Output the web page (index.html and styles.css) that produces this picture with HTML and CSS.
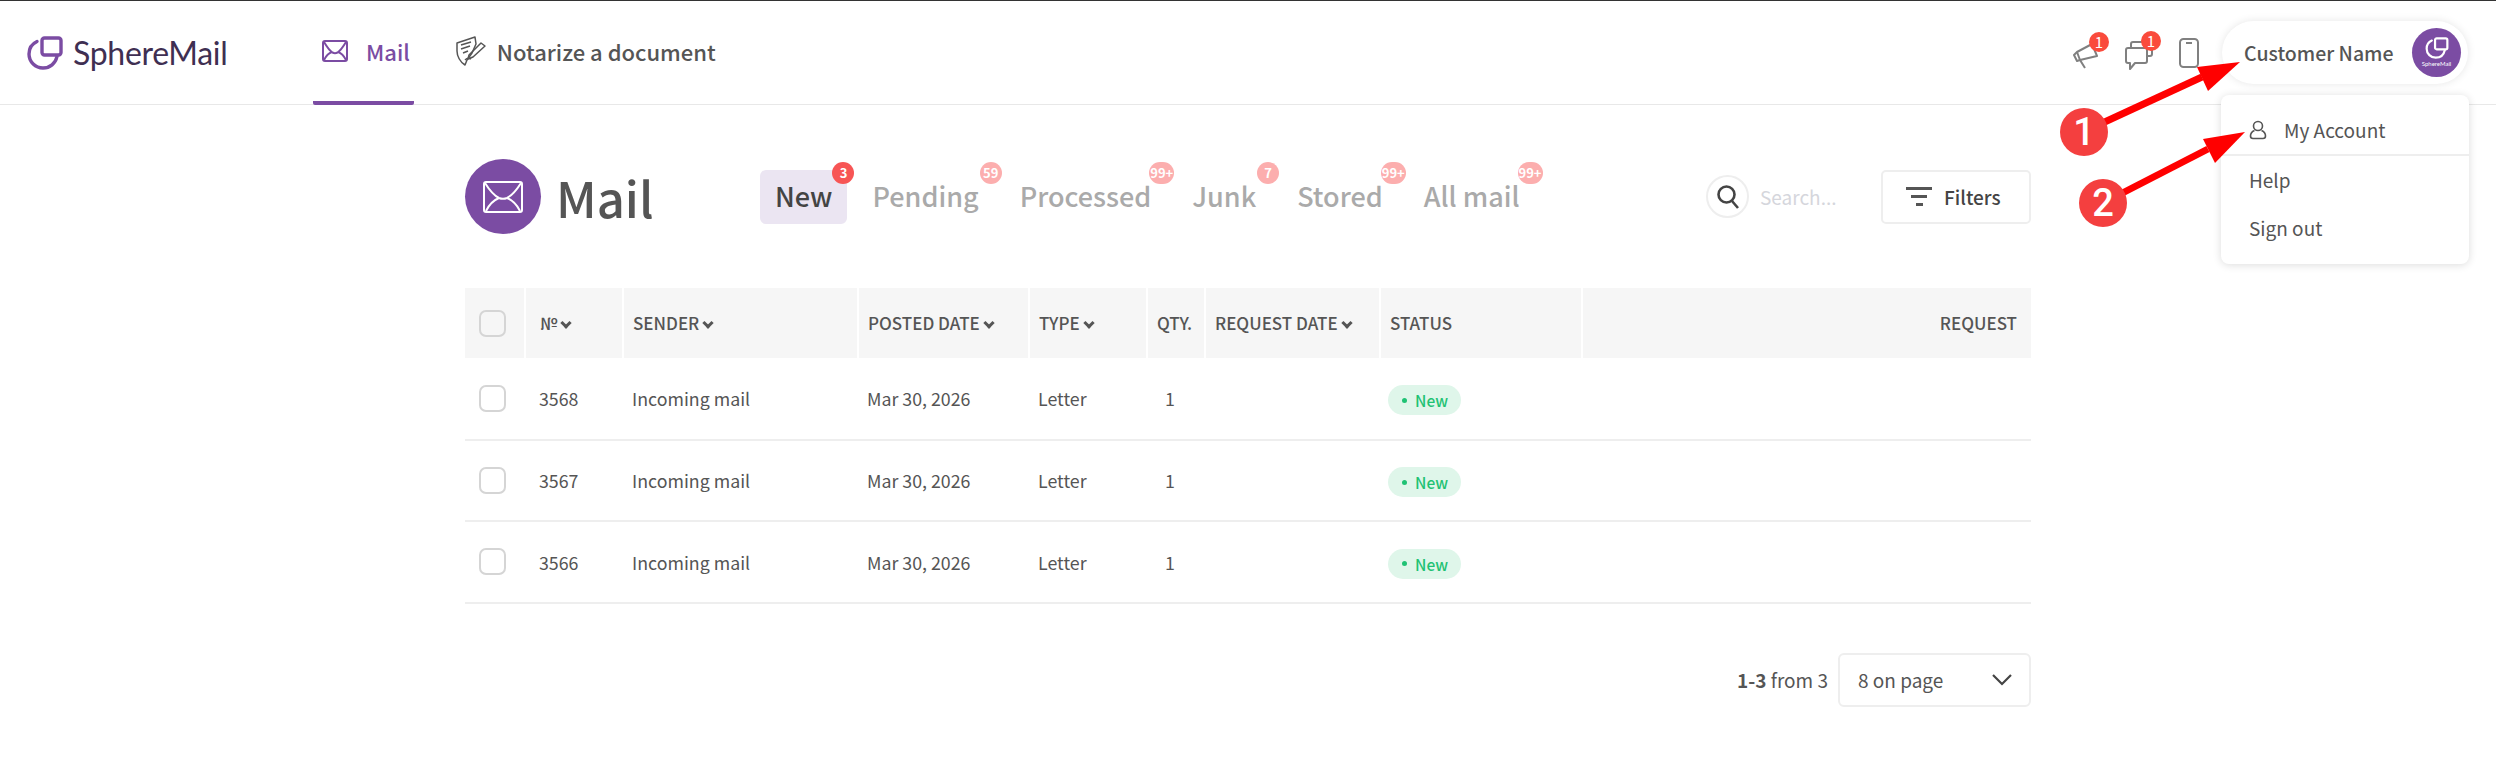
FILE: index.html
```html
<!DOCTYPE html>
<html lang="en">
  <head>
    <meta charset="UTF-8" />
    <meta name="viewport" content="width=device-width, initial-scale=1.0" />
    <title>SphereMail</title>
    <link rel="stylesheet" href="styles.css">
  </head>
  <body>
    <header class="topbar">
      <a class="logo">
        <svg width="36" height="34" viewBox="0 0 36 34" fill="none" stroke="#7b4ca3" stroke-width="3.4">
          <path d="M10 5.5C4.5 8 2 12.5 2 18c0 8 6.5 14 14 14 7 0 12.5-4.5 14-11.5" stroke-linecap="round"/>
          <rect x="15" y="2" width="19" height="17" rx="2.5"/>
        </svg>
        <span class="logo-text">SphereMail</span>
      </a>
      <nav class="nav">
        <a class="nav-item active">
          <svg width="26" height="22" viewBox="0 0 26 22" fill="none" stroke="#7b4ca3" stroke-width="2">
            <rect x="1" y="1" width="24" height="20" rx="2"/>
            <path d="M2 2c3 5 6 9 8.5 10.5 1.5.8 3.5.8 5 0C18 11 21 7 24 2M2 20c2-4 5-7 8-8M24 20c-2-4-5-7-8-8"/>
          </svg>
          Mail
        </a>
        <a class="nav-item">
          <svg width="32" height="32" viewBox="0 0 32 32" fill="none" stroke="#555" stroke-width="1.5" stroke-linejoin="round">
            <path d="M2 8 20 2l1 7-4 9-5 7-2 5C5 27 2 21 2 16z"/>
            <path d="M6 10l10-3M6 14l9-3M8 18l5-2"/>
            <path d="M14 20l12-12 4 3-12 11-5 2z"/>
            <path d="M10 25c2-2 4-2 6-1"/>
          </svg>
          Notarize a document
        </a>
      </nav>
      <div class="top-right">
        <div class="top-icon">
          <svg width="26" height="28" viewBox="0 0 26 28" fill="none" stroke="#808080" stroke-width="2" stroke-linejoin="round">
            <path d="M1 14 4 11 19 3l5 12-17 4-3 1z"/>
            <path d="M7 19l5 8M4 11l3 8"/>
          </svg>
          <span class="top-badge">1</span>
        </div>
        <div class="top-icon">
          <svg width="30" height="30" viewBox="0 0 30 30" fill="none" stroke="#808080" stroke-width="2" stroke-linejoin="round">
            <path d="M2 10a2 2 0 0 1 2-2h17a2 2 0 0 1 2 2v11a2 2 0 0 1-2 2H11l-5 6v-6H4a2 2 0 0 1-2-2z"/>
            <path d="M7 8V4a2 2 0 0 1 2-2h17a2 2 0 0 1 2 2v10a2 2 0 0 1-2 2h-3"/>
          </svg>
          <span class="top-badge">1</span>
        </div>
        <div class="top-icon phone">
          <svg width="20" height="30" viewBox="0 0 20 30" fill="none" stroke="#808080" stroke-width="2">
            <rect x="1" y="1" width="18" height="28" rx="3.5"/>
            <path d="M7 5h6"/>
          </svg>
        </div>
        <div class="account">
          <span class="account-name">Customer Name</span>
          <span class="avatar">
            <svg width="24" height="22" viewBox="0 0 36 34" fill="none" stroke="#fff" stroke-width="3.4">
              <path d="M10 5.5C4.5 8 2 12.5 2 18c0 8 6.5 14 14 14 7 0 12.5-4.5 14-11.5" stroke-linecap="round"/>
              <rect x="15" y="2" width="19" height="17" rx="2.5"/>
            </svg>
            <span class="avatar-text">SphereMail</span>
          </span>
          <div class="menu">
            <a class="menu-item first">
              <svg width="18" height="20" viewBox="0 0 18 20" fill="none" stroke="#555" stroke-width="1.6">
                <circle cx="9" cy="6" r="4.5"/>
                <path d="M5.5 10.5C3 11.5 1.5 13.5 1.5 16c0 1.5 1 2.5 2.5 2.5h10c1.5 0 2.5-1 2.5-2.5 0-2.5-1.5-4.500-4-5.500"/>
              </svg>
              My Account
            </a>
            <a class="menu-item">Help</a>
            <a class="menu-item">Sign out</a>
          </div>
        </div>
      </div>
    </header>

    <main class="content">
      <div class="toolbar">
        <span class="page-icon">
          <svg width="40" height="32" viewBox="0 0 40 32" fill="none" stroke="#fff" stroke-width="2">
            <rect x="1" y="1" width="38" height="30" rx="2"/>
            <path d="M2 2c5 8 10 13 14 15 2.5 1 5.5 1 8 0 4-2 9-7 14-15M3 30c3-6 8-11 13-13M37 30c-3-6-8-11-13-13"/>
          </svg>
        </span>
        <h1 class="page-title">Mail</h1>
        <div class="tabs">
          <a class="tab active">New<span class="tab-badge">3</span></a>
          <a class="tab">Pending<span class="tab-badge">59</span></a>
          <a class="tab">Processed<span class="tab-badge">99+</span></a>
          <a class="tab">Junk<span class="tab-badge">7</span></a>
          <a class="tab">Stored<span class="tab-badge">99+</span></a>
          <a class="tab">All mail<span class="tab-badge">99+</span></a>
        </div>
        <div class="search">
          <span class="search-btn">
            <svg width="24" height="26" viewBox="0 0 24 26" fill="none" stroke="#444" stroke-width="2.6">
              <circle cx="10.5" cy="10.5" r="8"/>
              <path d="M16 17l6 7"/>
            </svg>
          </span>
          <span class="search-text">Search...</span>
        </div>
        <button class="filters">
          <span class="filters-icon"><i></i><i></i><i></i></span>
          Filters
        </button>
      </div>

      <table class="mail-table">
        <colgroup>
          <col class="c-check"><col class="c-num"><col class="c-sender"><col class="c-date"><col class="c-type"><col class="c-qty"><col class="c-req"><col class="c-status"><col>
        </colgroup>
        <thead>
          <tr>
            <th><span class="check"></span></th>
            <th class="num">№ <b class="caret"></b></th>
            <th>SENDER <b class="caret"></b></th>
            <th>POSTED DATE <b class="caret"></b></th>
            <th>TYPE <b class="caret"></b></th>
            <th>QTY.</th>
            <th>REQUEST DATE <b class="caret"></b></th>
            <th>STATUS</th>
            <th class="right">REQUEST</th>
          </tr>
        </thead>
        <tbody>
          <tr>
            <td><span class="check"></span></td>
            <td class="num">3568</td>
            <td>Incoming mail</td>
            <td>Mar 30, 2026</td>
            <td>Letter</td>
            <td class="qty">1</td>
            <td></td>
            <td><span class="status">New</span></td>
            <td></td>
          </tr>
          <tr>
            <td><span class="check"></span></td>
            <td class="num">3567</td>
            <td>Incoming mail</td>
            <td>Mar 30, 2026</td>
            <td>Letter</td>
            <td class="qty">1</td>
            <td></td>
            <td><span class="status">New</span></td>
            <td></td>
          </tr>
          <tr>
            <td><span class="check"></span></td>
            <td class="num">3566</td>
            <td>Incoming mail</td>
            <td>Mar 30, 2026</td>
            <td>Letter</td>
            <td class="qty">1</td>
            <td></td>
            <td><span class="status">New</span></td>
            <td></td>
          </tr>
        </tbody>
      </table>

      <div class="pager">
        <span class="pager-count"><b>1-3</b> from 3</span>
        <div class="pager-select">
          8 on page
          <svg width="20" height="12" viewBox="0 0 20 12" fill="none" stroke="#444" stroke-width="2.2">
            <path d="M1 1l9 9 9-9"/>
          </svg>
        </div>
      </div>
    </main>

    <!-- red notes drawn over the screenshot -->
    <svg class="notes" width="2496" height="774" viewBox="0 0 2496 774">
      <path d="M2083 132 2202 77" stroke="#f00" stroke-width="7"/>
      <path d="M2240 62 2197 67 2208 91z" fill="#f00"/>
      <path d="M2103 203 2208 149" stroke="#f00" stroke-width="7"/>
      <path d="M2245 132 2203 139 2215 163z" fill="#f00"/>
      <circle cx="2084" cy="132" r="24" fill="#f43f3f"/>
      <circle cx="2103" cy="203" r="24" fill="#f43f3f"/>
      <text x="2084" y="145" class="note-num">1</text>
      <text x="2103" y="216" class="note-num">2</text>
    </svg>
  </body>
</html>
```

FILE: styles.css
```css
* {
  box-sizing: border-box;
  font-family: "Noto Sans CJK SC", "Noto Sans", sans-serif;
}

body {
  margin: 0;
  background-color: #fff;
  color: #555;
  position: relative;
  height: 774px;
  overflow: hidden;
}

a {
  color: inherit;
  text-decoration: none;
}

.topbar {
  display: flex;
  align-items: center;
  height: 105px;
  padding: 0 28px 0 27px;
  border-top: 1px solid #333;
  border-bottom: 1px solid #e8e8e8;
}

.logo {
  display: flex;
  align-items: center;
  gap: 10px;
  width: 286px;
}

.logo-text {
  font-family: Lato, sans-serif;
  font-size: 32px;
  color: #3f2f52;
  letter-spacing: -0.3px;
}

.nav {
  display: flex;
  align-self: stretch;
  gap: 41px;
}

.nav-item {
  display: flex;
  align-items: center;
  gap: 10px;
  font-size: 22px;
  font-weight: 500;
  line-height: 30px;
  border-bottom: 4px solid transparent;
  margin-bottom: -1px;
}

.nav-item.active {
  color: #7b4ca3;
  gap: 18px;
  padding: 0 4px 0 9px;
  border-bottom-color: #7b4ca3;
  border-radius: 0 0 2px 2px;
}

.top-right {
  display: flex;
  align-items: center;
  margin-left: auto;
}

.top-icon {
  position: relative;
  display: flex;
  margin-right: 25px;
  padding-top: 4px;
}

.top-icon.phone {
  margin-right: 23px;
  padding-top: 0;
}

.top-badge {
  position: absolute;
  top: -5px;
  right: -10px;
  width: 20px;
  height: 20px;
  border-radius: 50%;
  background-color: #fa4b3c;
  color: #fff;
  font-size: 15px;
  line-height: 20px;
  text-align: center;
}

.top-icon + .top-icon .top-badge {
  right: -7px;
}

.account {
  position: relative;
  display: flex;
  align-items: center;
  justify-content: space-between;
  width: 246px;
  height: 63px;
  padding: 0 7px 0 22px;
  border-radius: 32px;
  background-color: #fff;
  box-shadow: 0 0 8px rgba(0, 0, 0, 0.1);
}

.account-name {
  font-size: 19.5px;
  font-weight: 500;
  line-height: 28px;
  white-space: nowrap;
}

.avatar {
  display: flex;
  flex-direction: column;
  align-items: center;
  justify-content: center;
  gap: 1px;
  width: 49px;
  height: 49px;
  border-radius: 50%;
  background-color: #7b4ca3;
}

.avatar-text {
  font-family: Lato, sans-serif;
  font-size: 6px;
  line-height: 8px;
  color: #fff;
}

.menu {
  position: absolute;
  top: 74px;
  left: -1px;
  width: 248px;
  height: 169px;
  border-radius: 8px;
  background-color: #fff;
  box-shadow: 0 1px 8px rgba(0, 0, 0, 0.14);
}

.menu-item {
  display: flex;
  align-items: center;
  gap: 17px;
  height: 48px;
  padding: 0 28px;
  font-size: 19px;
  line-height: 28px;
}

.menu-item.first {
  height: 61px;
  padding-top: 10px;
  border-bottom: 2px solid #eee;
}

.content {
  width: 1566px;
  margin-left: 465px;
}

.toolbar {
  display: flex;
  align-items: center;
  height: 75px;
  margin: 54px 0;
}

.page-icon {
  display: flex;
  align-items: center;
  justify-content: center;
  width: 76px;
  height: 75px;
  border-radius: 50%;
  background-color: #7b4ca3;
}

.page-title {
  width: 204px;
  margin: 0 0 0 15px;
  font-size: 49px;
  font-weight: 500;
  line-height: 70px;
  color: #555;
}

.tabs {
  display: flex;
  gap: 9px;
  height: 54px;
}

.tab {
  position: relative;
  padding: 0 16px;
  border-radius: 6px;
  font-size: 27px;
  font-weight: 500;
  line-height: 52px;
  color: #aaa;
}

.tab.active {
  padding: 0 15px;
  background-color: #ebe5f2;
  color: #444;
}

.tab-badge {
  position: absolute;
  top: -8px;
  right: -7px;
  min-width: 22px;
  height: 22px;
  padding: 0 1px;
  border-radius: 11px;
  background-color: #fcaeae;
  color: #fff;
  font-size: 13px;
  font-weight: 700;
  line-height: 21px;
  text-align: center;
}

.tab.active .tab-badge {
  background-color: #f75555;
}

.search {
  display: flex;
  align-items: center;
  gap: 11px;
  margin-left: auto;
  width: 175px;
}

.search-btn {
  display: flex;
  align-items: center;
  justify-content: center;
  width: 43px;
  height: 43px;
  border: 2px solid #eee;
  border-radius: 50%;
}

.search-text {
  font-size: 19px;
  line-height: 26px;
  color: #d5d6dc;
}

.filters {
  display: flex;
  align-items: center;
  gap: 12px;
  width: 150px;
  height: 54px;
  padding: 0 0 0 23px;
  border: 2px solid #eee;
  border-radius: 5px;
  background-color: #fff;
  color: #444;
  font-size: 19px;
  font-weight: 500;
}

.filters-icon {
  display: flex;
  flex-direction: column;
  align-items: center;
  gap: 5px;
}

.filters-icon i {
  display: block;
  width: 26px;
  height: 3px;
  background-color: #555;
}

.filters-icon i:nth-child(2) {
  width: 16px;
}

.filters-icon i:nth-child(3) {
  width: 7px;
}

.mail-table {
  width: 1566px;
  border-collapse: collapse;
  table-layout: fixed;
}

.c-check { width: 60px; }
.c-num { width: 98px; }
.c-sender { width: 235px; }
.c-date { width: 171px; }
.c-type { width: 118px; }
.c-qty { width: 58px; }
.c-req { width: 175px; }
.c-status { width: 202px; }

.mail-table th {
  height: 70px;
  padding: 0 9px;
  border-left: 2px solid #fff;
  background-color: #f6f6f6;
  font-size: 17px;
  font-weight: 500;
  line-height: 24px;
  text-align: left;
  white-space: nowrap;
}

.mail-table th:first-child {
  border-left: 0;
}

.mail-table td {
  height: 81.5px;
  padding: 0 9px;
  border-bottom: 2px solid #eee;
  font-size: 17.8px;
  line-height: 26px;
}

.mail-table th:first-child,
.mail-table td:first-child {
  padding: 0 0 0 14px;
}

.mail-table .num {
  padding-left: 14px;
}

.mail-table .right {
  padding-right: 14px;
  text-align: right;
}

.mail-table .qty {
  padding-left: 18px;
}

.check {
  display: block;
  width: 27px;
  height: 27px;
  border: 2px solid #d5d5d5;
  border-radius: 7px;
  background-color: #fff;
}

.mail-table th .check {
  background-color: transparent;
}

.caret {
  display: inline-block;
  width: 8px;
  height: 8px;
  margin: 0 3px 4px 1px;
  border-right: 3px solid #555;
  border-bottom: 3px solid #555;
  transform: rotate(45deg);
  vertical-align: middle;
}

.status {
  display: inline-flex;
  align-items: center;
  gap: 8px;
  height: 30px;
  margin-left: -1px;
  padding: 0 13px 0 14px;
  border-radius: 15px;
  background-color: #dff6ea;
  color: #1fc274;
  font-size: 15.5px;
  font-weight: 500;
  line-height: 22px;
}

.status::before {
  content: "";
  width: 5px;
  height: 5px;
  border-radius: 50%;
  background-color: #1fc274;
}

.pager {
  display: flex;
  align-items: center;
  justify-content: flex-end;
  gap: 10px;
  margin-top: 49px;
}

.pager-count {
  font-size: 19px;
  line-height: 26px;
}

.pager-select {
  display: flex;
  align-items: center;
  justify-content: space-between;
  width: 193px;
  height: 54px;
  padding: 0 17px 0 18px;
  border: 2px solid #eee;
  border-radius: 6px;
  font-size: 19px;
}

.notes {
  position: absolute;
  top: 0;
  left: 0;
}

.note-num {
  fill: #fff;
  font-family: Roboto, sans-serif;
  font-size: 38px;
  font-weight: 500;
  text-anchor: middle;
}
```
